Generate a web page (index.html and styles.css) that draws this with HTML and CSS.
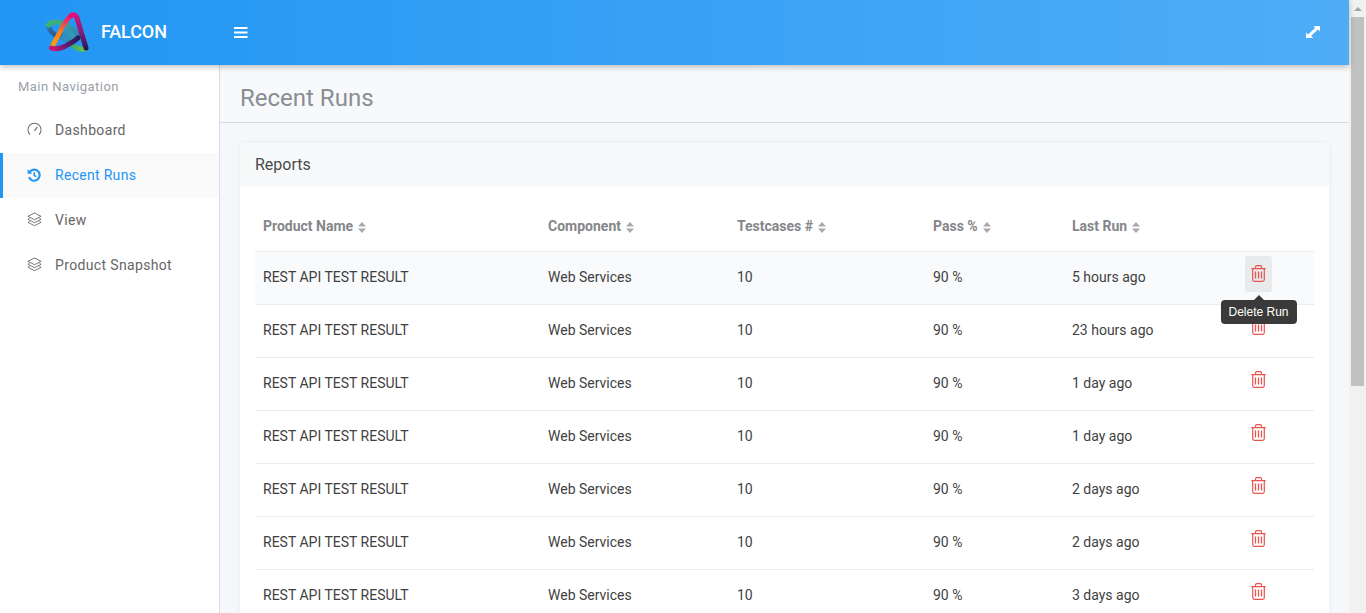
FILE: index.html
```html
<!DOCTYPE html>
<html lang="en">
<head>
<meta charset="utf-8">
<title>Recent Runs</title>
<link rel="stylesheet" href="styles.css">
</head>
<body>
<svg class="defs" width="0" height="0" aria-hidden="true">
  <defs>
    <linearGradient id="gGreen" gradientUnits="userSpaceOnUse" x1="3" y1="14" x2="34" y2="26"><stop offset="0" stop-color="#3fb56b"/><stop offset=".5" stop-color="#3aa0a0"/><stop offset="1" stop-color="#2f7fc0"/></linearGradient>
    <linearGradient id="gBlue" gradientUnits="userSpaceOnUse" x1="3" y1="14" x2="20" y2="26"><stop offset="0" stop-color="#2d78b0"/><stop offset="1" stop-color="#2a3f8c"/></linearGradient>
    <linearGradient id="gTri" gradientUnits="userSpaceOnUse" x1="14" y1="28" x2="32" y2="20"><stop offset="0" stop-color="#2a86c8"/><stop offset="1" stop-color="#35a3a8"/></linearGradient>
    <linearGradient id="gOrange" gradientUnits="userSpaceOnUse" x1="7" y1="35" x2="26" y2="4"><stop offset="0" stop-color="#ff9f10"/><stop offset=".45" stop-color="#f98216"/><stop offset=".75" stop-color="#ee3a5c"/><stop offset="1" stop-color="#e8107a"/></linearGradient>
    <linearGradient id="gRight" gradientUnits="userSpaceOnUse" x1="26" y1="3" x2="41" y2="38"><stop offset="0" stop-color="#e8107a"/><stop offset=".5" stop-color="#8a1d7c"/><stop offset="1" stop-color="#251a4e"/></linearGradient>
    <linearGradient id="gBottom" gradientUnits="userSpaceOnUse" x1="6" y1="37" x2="33" y2="27"><stop offset="0" stop-color="#d01570"/><stop offset=".5" stop-color="#6a1b78"/><stop offset="1" stop-color="#231c5c"/></linearGradient>
    <linearGradient id="gLime" gradientUnits="userSpaceOnUse" x1="24" y1="32" x2="40" y2="38"><stop offset="0" stop-color="#2f9f7a"/><stop offset="1" stop-color="#6cc748"/></linearGradient>
    <symbol id="trash" viewBox="0 0 15 17">
      <path d="M.3 3.600h14.400M4.500 3.400V1.900C4.500 1.100 5 .6 5.800 .6h3.400c.8 0 1.300.5 1.300 1.300v1.500M1.700 3.800v10.800c0 1.200.6 1.800 1.700 1.800h8.200c1.100 0 1.700-.6 1.700-1.800V3.800" fill="none" stroke="#e8554e" stroke-width="1.200"/>
      <path d="M4.500 6.400v7.200M7.500 6.400v7.200M10.500 6.400v7.200" fill="none" stroke="#e8554e" stroke-width="1.300"/>
    </symbol>
    <symbol id="layers" viewBox="0 0 16 16">
      <path d="M8 1 15 4.600 8 8.200 1 4.600zM2.800 6.700 1 7.800l7 3.600 7-3.600-1.800-1.100M2.800 10 1 11l7 3.600 7-3.600-1.800-1" fill="none" stroke="#6e6e6e" stroke-width="1" stroke-linejoin="round"/>
    </symbol>
    <symbol id="sort" viewBox="0 0 8 11">
      <path d="M4 0 8 4.400H0zM4 11 0 6.600h8z" fill="#a9a9ad"/>
    </symbol>
  </defs>
</svg>
<div class="app">
  <div class="page">
    <header class="topbar">
      <div class="brand">
        <svg class="logo" viewBox="0 0 46 46" aria-hidden="true">
          <g fill="none" stroke-linecap="round">
            <path d="M3.500 15C5 22 12 27 19 24" stroke="url(#gBlue)" stroke-width="5"/>
            <path d="M14 28 22 16l12 10-11 6z" fill="url(#gTri)"/>
            <path d="M3.500 14C8 9 18 11 25 16c4 3 7 6 9 10" stroke="url(#gGreen)" stroke-width="5"/>
            <path d="M8 34 15 21C18 15 21 8 26 5" stroke="url(#gOrange)" stroke-width="4.800"/>
            <path d="M24 32c5 4 10 7 16 6" stroke="url(#gLime)" stroke-width="5"/>
            <path d="M26 4.500c3-1.500 5-.5 6 2.500l9 30" stroke="url(#gRight)" stroke-width="5"/>
            <path d="M6.500 37c4 2 12 0 17.500-4 4-2 7-4 9-6" stroke="url(#gBottom)" stroke-width="5"/>
          </g>
        </svg>
        <span class="brand-name">FALCON</span>
      </div>
      <button class="icon-btn" type="button" aria-label="Menu">
        <svg viewBox="0 0 14 11" width="14" height="11"><path d="M0 0h13.500v2H0zM0 4.500h13.500v2H0zM0 9h13.500v2H0z" fill="#fff"/></svg>
      </button>
      <button class="icon-btn expand" type="button" aria-label="Fullscreen">
        <svg viewBox="0 0 14 13" width="14" height="13"><path d="M8 0h6v5.600l-2-2-6.800 6.200 2 2.200H0V6.400l2 2L8.800 2.200z" fill="#fff"/></svg>
      </button>
    </header>
    <div class="body">
      <nav class="sidebar">
        <div class="nav-title">Main Navigation</div>
        <a class="nav-item">
          <svg class="nav-icon" viewBox="0 0 16 16"><path d="M3.200 13.400A7 7 0 1 1 12.800 13.400" fill="none" stroke="#6e6e6e" stroke-width="1.100"/><path d="M8 9.500 11 5.200" fill="none" stroke="#6e6e6e" stroke-width="1.200"/></svg>
          <span>Dashboard</span>
        </a>
        <a class="nav-item active">
          <svg class="nav-icon" viewBox="0 0 16 16"><path d="M3.200 4.300A6.300 6.300 0 1 1 2.300 10.500" fill="none" stroke="#2196f3" stroke-width="2.400"/><path d="M.7 1.500 6 6.500H.7z" fill="#2196f3"/><path d="M8.300 4.800v3.700l2.300 1.300" fill="none" stroke="#2196f3" stroke-width="1.800"/></svg>
          <span>Recent Runs</span>
        </a>
        <a class="nav-item">
          <svg class="nav-icon"><use href="#layers"/></svg>
          <span>View</span>
        </a>
        <a class="nav-item">
          <svg class="nav-icon"><use href="#layers"/></svg>
          <span>Product Snapshot</span>
        </a>
      </nav>
      <main class="content">
        <div class="page-head"><h1>Recent Runs</h1></div>
        <section class="card">
          <div class="card-head">Reports</div>
          <div class="card-body">
            <table class="runs">
              <thead>
                <tr>
                  <th class="c1">Product Name <svg class="sort"><use href="#sort"/></svg></th>
                  <th class="c2">Component <svg class="sort"><use href="#sort"/></svg></th>
                  <th class="c3">Testcases # <svg class="sort"><use href="#sort"/></svg></th>
                  <th class="c4">Pass % <svg class="sort"><use href="#sort"/></svg></th>
                  <th class="c5">Last Run <svg class="sort"><use href="#sort"/></svg></th>
                  <th></th>
                </tr>
              </thead>
              <tbody>
                <tr class="hover">
                  <td>REST API TEST RESULT</td><td>Web Services</td><td>10</td><td>90 %</td><td>5 hours ago</td>
                  <td class="act"><span class="del on"><svg class="bin"><use href="#trash"/></svg><span class="tip">Delete Run</span></span></td>
                </tr>
                <tr>
                  <td>REST API TEST RESULT</td><td>Web Services</td><td>10</td><td>90 %</td><td>23 hours ago</td>
                  <td class="act"><span class="del"><svg class="bin"><use href="#trash"/></svg></span></td>
                </tr>
                <tr>
                  <td>REST API TEST RESULT</td><td>Web Services</td><td>10</td><td>90 %</td><td>1 day ago</td>
                  <td class="act"><span class="del"><svg class="bin"><use href="#trash"/></svg></span></td>
                </tr>
                <tr>
                  <td>REST API TEST RESULT</td><td>Web Services</td><td>10</td><td>90 %</td><td>1 day ago</td>
                  <td class="act"><span class="del"><svg class="bin"><use href="#trash"/></svg></span></td>
                </tr>
                <tr>
                  <td>REST API TEST RESULT</td><td>Web Services</td><td>10</td><td>90 %</td><td>2 days ago</td>
                  <td class="act"><span class="del"><svg class="bin"><use href="#trash"/></svg></span></td>
                </tr>
                <tr>
                  <td>REST API TEST RESULT</td><td>Web Services</td><td>10</td><td>90 %</td><td>2 days ago</td>
                  <td class="act"><span class="del"><svg class="bin"><use href="#trash"/></svg></span></td>
                </tr>
                <tr>
                  <td>REST API TEST RESULT</td><td>Web Services</td><td>10</td><td>90 %</td><td>3 days ago</td>
                  <td class="act"><span class="del"><svg class="bin"><use href="#trash"/></svg></span></td>
                </tr>
              </tbody>
            </table>
          </div>
        </section>
      </main>
    </div>
  </div>
  <div class="scrollbar" aria-hidden="true">
    <span class="arrow"></span>
    <span class="thumb"></span>
  </div>
</div>
</body>
</html>
```
FILE: styles.css
```css
* { box-sizing: border-box; }
html, body { margin: 0; height: 100%; overflow: hidden; }
body { font-family: Roboto, "Liberation Sans", sans-serif; font-size: 14px; color: #444; background: #f5f7fb; }
.defs { position: absolute; }
.app { display: flex; height: 613px; }
.page { flex: 1; min-width: 0; display: flex; flex-direction: column; }

.topbar { position: relative; z-index: 2; flex: none; height: 65px; display: flex; align-items: center; background: linear-gradient(to right, #2196f3, #4fadf7); box-shadow: 0 2px 6px rgba(0,0,0,.25); }
.brand { width: 220px; flex: none; display: flex; align-items: center; padding-left: 45px; }
.logo { flex: none; width: 46px; height: 46px; margin-top: 2px; }
.brand-name { margin-left: 10px; margin-bottom: 2px; color: #fff; font-size: 18px; font-weight: 500; letter-spacing: -.08px; }
.icon-btn { display: flex; padding: 0; border: 0; background: none; margin-left: 14px; }
.icon-btn.expand { margin-left: auto; margin-right: 29px; }

.body { flex: 1; min-height: 0; display: flex; }
.sidebar { flex: none; width: 220px; background: #fff; border-right: 1px solid #d8dde6; }
.nav-title { height: 43px; padding: 14px 0 0 18px; font-size: 13px; line-height: 15px; letter-spacing: .46px; color: #9aa0a8; }
.nav-item { height: 45px; display: flex; align-items: center; padding: 0 0 2px 27px; font-size: 14px; letter-spacing: .35px; color: #666; }
.nav-item span { margin-left: 13px; }
.nav-icon { flex: none; width: 15px; height: 15px; }
.nav-item.active { background: #fafafa; color: #2196f3; padding-left: 24px; border-left: 3px solid #2196f3; }
.nav-item.active .nav-icon { width: 14px; height: 14px; }
.nav-item.active span { margin-left: 14px; letter-spacing: .3px; }

.content { flex: 1; min-width: 0; overflow: hidden; }
.page-head { height: 58px; padding: 8px 20px 0; display: flex; align-items: center; background: #f8f9fb; border-bottom: 1px solid #cfdde8; }
.page-head h1 { margin: 0; font-size: 24px; font-weight: 400; color: #8a8d93; }
.card { margin: 20px 20px 0; background: #fff; border-radius: 4px; box-shadow: 0 0 6px rgba(0,0,0,.05); }
.card-head { height: 43px; padding-left: 15px; display: flex; align-items: center; font-size: 16px; color: #4a4a4a; background: #f8f9fb; border-radius: 4px 4px 0 0; }
.card-body { padding: 15px; }

.runs { width: 100%; border-collapse: collapse; table-layout: fixed; font-size: 14px; }
.runs th { height: 50px; padding: 0 8px; text-align: left; font-weight: 700; color: #85868a; border-bottom: 1px solid #e9ecef; white-space: nowrap; }
.runs td { height: 53px; padding: 0 8px 2px; color: #3f3f3f; border-bottom: 1px solid #e9ecef; white-space: nowrap; }
.c1 { width: 285px; }
.c2 { width: 189px; }
.c3 { width: 196px; }
.c4 { width: 139px; }
.c5 { width: 173px; }
.sort { width: 8px; height: 11px; margin-left: 1.6px; vertical-align: -2px; }
.runs tr.hover td { background: #f9fafc; }
.runs td.act { padding: 0; vertical-align: top; }
.del { position: relative; display: flex; align-items: center; justify-content: center; width: 27px; height: 36px; margin: 4px 0 0 8px; border-radius: 3px; }
.del.on { background: #e9eaec; }
.bin { width: 15px; height: 17px; margin-bottom: 1px; }
.tip { position: absolute; z-index: 3; top: 44px; left: 50%; transform: translateX(-50%); padding: 0 8px; height: 24px; line-height: 24px; font-size: 12px; color: #fff; background: #3a3a3a; border-radius: 4px; white-space: nowrap; font-family: "Liberation Sans", Arial, sans-serif; }
.tip::before { content: ""; position: absolute; left: 50%; top: -5px; margin-left: -5px; border: 5px solid transparent; border-top: 0; border-bottom-color: #3a3a3a; }

.scrollbar { flex: none; width: 17px; display: flex; flex-direction: column; align-items: center; background: #f1f1f1; }
.arrow { flex: none; margin-top: 7px; width: 0; height: 0; border: 4px solid transparent; border-top: 0; border-bottom: 4px solid #a3a3a3; }
.thumb { flex: none; width: 13px; height: 369px; margin-top: 6px; background: #c1c1c1; }
```
